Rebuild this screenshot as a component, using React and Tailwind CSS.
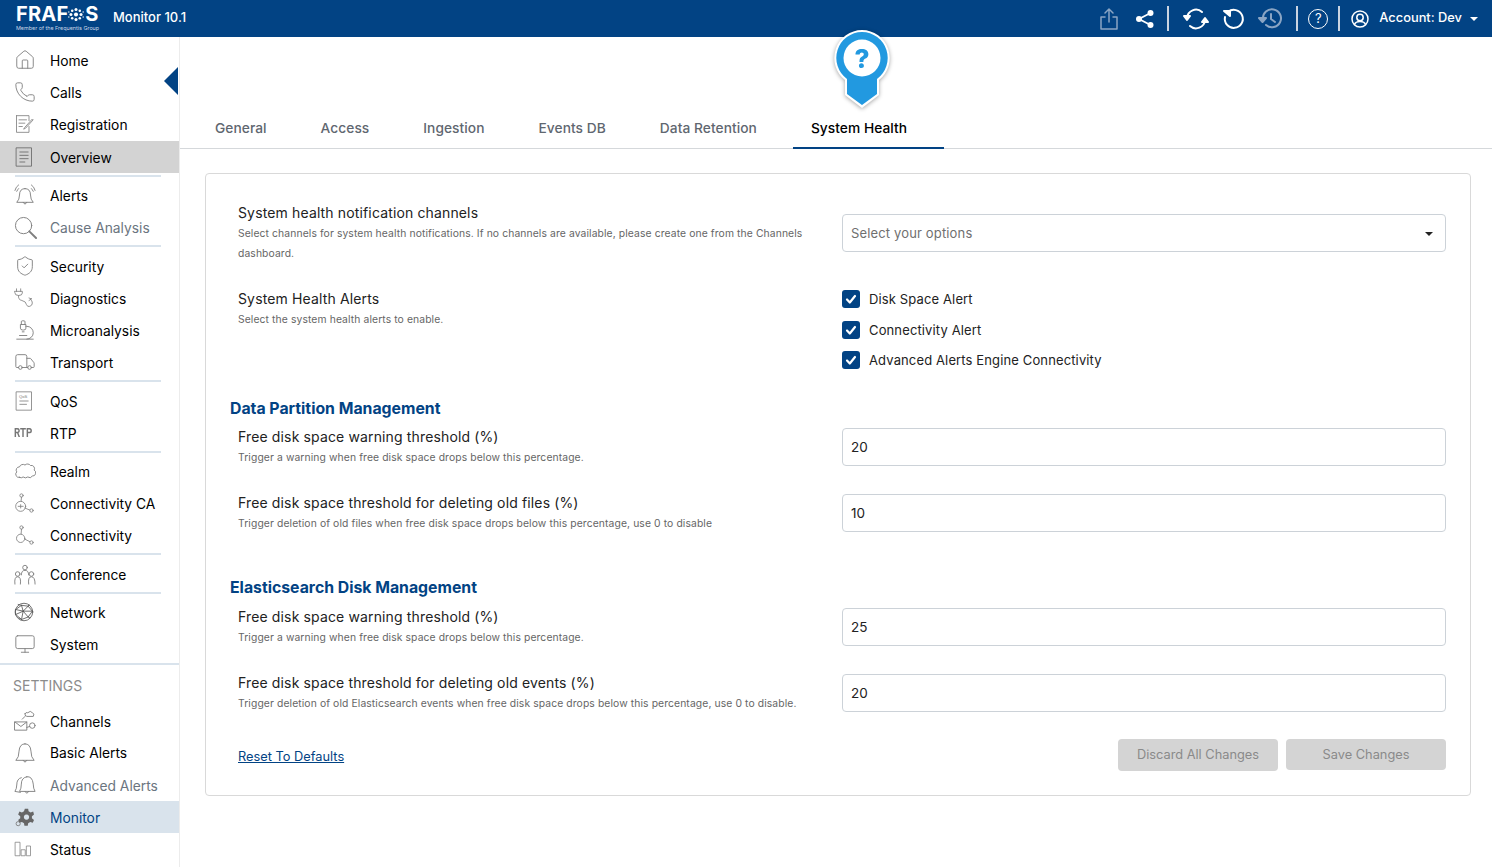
import React from 'react';
import { House, Phone, Truck, Microscope, ShieldCheck, Monitor } from 'lucide-react';

const ic = { fill: 'none', stroke: '#7f7f7f', strokeWidth: 1, strokeLinecap: 'round', strokeLinejoin: 'round' };

const Svg = ({ children, size = 20, box = 24 }) => (
    <svg width={size} height={size} viewBox={`0 0 ${box} ${box}`} {...ic}>{children}</svg>
);

const lu = { size: 22, strokeWidth: 1, color: '#7f7f7f' };

const icons = {
    home: <House {...lu} />,
    calls: <Phone {...lu} />,
    registration: <Svg><path d="M3 2h15v6M18 15v7H3V2M6 7h9M6 11h7M6 15h4M13 16l9-10 1 1-9 10-2 1Z" /></Svg>,
    overview: <Svg><path d="M3 1h18v22H3ZM7 6h10M7 10h10M7 14h10M7 18h6" stroke="#666" /></Svg>,
    alerts: <Svg size={22}><path d="M12 5q-6 0-6 7 0 5-3 8h18q-3-3-3-8 0-7-6-7ZM10 20q2 4 4 0M1 7q1-4 4-6M23 7q-1-4-4-6M3 8q1-2 2-3M21 8q-1-2-2-3" /></Svg>,
    cause: <Svg size={23}><circle cx="10" cy="10" r="8.5" /><path d="m16 16 7 7" strokeWidth="2" /></Svg>,
    security: <ShieldCheck {...lu} />,
    diagnostics: <Svg><path d="M3 1v3M8 1v3M1 4h9v2q0 3-4.500 3T1 6ZM5.500 9q-1 5 4 6 5 1 5.500 5 1 3 4 2t3-4-2-4M18 15l3-2M18 12l3 1" /></Svg>,
    micro: <Microscope {...lu} />,
    transport: <Truck {...lu} />,
    qos: <Svg><path d="M3 1h18v22H3ZM7 12h10M7 16h8" /><text x="6" y="8" fontSize="5" stroke="none" fill="#777" fontFamily="Liberation Sans">QoS</text></Svg>,
    realm: <Svg size={22} box={24}><path d="M6 19a3.500 3.500 0 0 1-3-6 3.500 3.500 0 0 1 3-5.500 4 4 0 0 1 6-2 4 4 0 0 1 6 .5 3.500 3.500 0 0 1 4 5 3.500 3.500 0 0 1-2 6.500 3.500 3.500 0 0 1-5 1 4 4 0 0 1-5 0 3.500 3.500 0 0 1-4 .5Z" /></Svg>,
    connca: <Svg><circle cx="8" cy="16" r="6" /><circle cx="9" cy="3" r="2" /><circle cx="21" cy="21" r="2" /><path d="M9 5 8.500 10M13 18l6 2.500M5 16h6M8 14v4" /></Svg>,
    conn: <Svg><circle cx="8" cy="16" r="5" /><circle cx="9" cy="3" r="2" /><circle cx="21" cy="21" r="2" /><path d="M9 5 8.500 11M13 17l6 3" /></Svg>,
    conf: <Svg size={22}><circle cx="12" cy="5" r="2.500" /><path d="M8 13q0-5 4-5t4 5" /><circle cx="4" cy="12" r="2.500" /><path d="M1 23q-1-8 3-8t3 8" /><circle cx="19" cy="12" r="2.500" /><path d="M16 23q-1-8 3-8t4 8" /></Svg>,
    network: <Svg><circle cx="12" cy="12" r="10.500" stroke="#555" /><path d="M2 9 9 4l8 1 5 6-5 7-8 3-7-6ZM9 4l2 7 6-6M11 11l6 7M11 11l-9-2M11 11l-2 10M11 11 22 11M11 11l-9 4M9 4 5 3M17 5l1-2M17 18l2 1M9 21l-3-2" stroke="#555" /></Svg>,
    system: <Monitor {...lu} />,
    channels: <Svg size={22}><path d="M1 13h13v9H1ZM1 13l6.500 5 6.500-5M9 10l3-3M14 19l3-1" /><path d="M12 4q1-2 3-1 3-3 5 0 3 1 1 4h-7q-3-1-2-3Z" /><circle cx="20" cy="17" r="3" /></Svg>,
    basic: <Svg size={22}><path d="M12 2q-6 0-6.500 8 0 7-3.500 10h20q-3.500-3-3.500-10Q18 2 12 2ZM10 20q2 4 4 0" /></Svg>,
    advanced: <Svg size={22}><path d="M8 4q-5 1-5 8 0 4-2 7l6 1M14 3q6-1 7 8 0 5 2 8H6q2-3 2-8 0-7 6-8ZM12 19q2 4 4 0" /></Svg>,
    status: <Svg size={18}><path d="M2 3h6v18H2ZM10 13h5v8h-5ZM17 8h5v13h-5Z" /></Svg>,
};

const Gear = () => (
    <svg width="20" height="20" viewBox="0 0 24 24">
        <path fill="#666" fillRule="evenodd" d="M13 2h4l.5 3 2.500 1.500 3-1 1 3.500-2.500 2v2.500l2.500 2-1.500 3.500-3-1-2.500 1.500-.5 3h-4l-.5-3-2.500-1.500-3 1L5 15.500l2.500-2V11L5 9l1.500-3.500 3 1L12 5ZM15 9a3.200 3.200 0 1 0 .01 0Z" />
        <circle cx="5" cy="20" r="2.500" fill="none" stroke="#777" />
    </svg>
);

const Item = ({ icon, label, muted, active, gray, className = 'h-[32px]' }) => (
    <div className={`flex items-center pl-[14px] text-[13.8px] ${className} ${active ? 'bg-[#d9e3ec] text-[#024384]' : gray ? 'bg-[#d3d3d3] text-black' : muted ? 'text-[#6b7580]' : 'text-black'}`}>
        <div className="w-[36px] shrink-0 flex items-center">{icon}</div>
        <span className="pt-[2px]">{label}</span>
    </div>
);

const Divider = ({ tight }) => <div className={`h-[2px] mt-[2px] ml-[15px] w-[146px] bg-[#d9e3ec] ${tight ? 'mb-[2px]' : 'mb-[3px]'}`} />;

const Sidebar = () => (
    <aside className="relative w-[180px] shrink-0 border-r border-[#ececec] pt-[7px] bg-white">
        <div className="absolute right-[1px] top-[30px] w-0 h-0 border-y-[14px] border-y-transparent border-r-[14px] border-r-[#024384]" />
        <Item icon={icons.home} label="Home" />
        <Item icon={icons.calls} label="Calls" />
        <Item icon={icons.registration} label="Registration" />
        <Item icon={icons.overview} label="Overview" gray className="h-[32px] mt-[1px]" />
        <Divider tight />
        <Item icon={icons.alerts} label="Alerts" />
        <Item icon={icons.cause} label="Cause Analysis" muted />
        <Divider />
        <Item icon={icons.security} label="Security" />
        <Item icon={icons.diagnostics} label="Diagnostics" />
        <Item icon={icons.micro} label="Microanalysis" />
        <Item icon={icons.transport} label="Transport" />
        <Divider />
        <Item icon={icons.qos} label="QoS" />
        <Item icon={<span className="text-[13px] font-bold text-[#777] font-['Roboto',sans-serif] inline-block scale-x-75 origin-left">RTP</span>} label="RTP" />
        <Divider tight />
        <Item icon={icons.realm} label="Realm" />
        <Item icon={icons.connca} label="Connectivity CA" />
        <Item icon={icons.conn} label="Connectivity" />
        <Divider />
        <Item icon={icons.conf} label="Conference" />
        <Divider tight />
        <Item icon={icons.network} label="Network" />
        <Item icon={icons.system} label="System" />
        <div className="h-[2px] mt-[3px] bg-[#d9e3ec]" />
        <div className="h-[41px] pl-[13px] pb-[1px] flex items-center text-[14px] text-[#8c8c8c]">SETTINGS</div>
        <Item icon={icons.channels} label="Channels" className="h-[30px]" />
        <Item icon={icons.basic} label="Basic Alerts" className="h-[33px]" />
        <Item icon={icons.advanced} label="Advanced Alerts" muted />
        <Item icon={<Gear />} label="Monitor" active />
        <Item icon={icons.status} label="Status" />
    </aside>
);

const wh = { fill: 'none', stroke: '#fff', strokeLinecap: 'round', strokeLinejoin: 'round' };

const Header = () => (
    <header className="h-[37px] bg-[#024384] text-white flex items-center shrink-0">
        <div className="ml-[16px] w-[97px] flex flex-col">
            <div className="flex items-center h-[19px] text-[20px] leading-[19px] font-bold tracking-[0.2px]">
                <span>FRAF</span>
                <svg width="16" height="17" viewBox="0 0 19 18">
                    <g fill="#fff">
                        <circle cx="9.500" cy="9" r="2.400" /><circle cx="9.500" cy="3" r="1.800" /><circle cx="9.500" cy="15" r="1.800" />
                        <circle cx="3.500" cy="9" r="1.800" /><circle cx="15.500" cy="9" r="1.800" /><circle cx="5" cy="4.500" r="1.500" />
                        <circle cx="14" cy="4.500" r="1.500" /><circle cx="5" cy="13.500" r="1.500" /><circle cx="14" cy="13.500" r="1.500" />
                        <circle cx="1" cy="6" r=".8" /><circle cx="18" cy="6" r=".8" /><circle cx="1" cy="12" r=".8" /><circle cx="18" cy="12" r=".8" />
                    </g>
                </svg>
                <span className="ml-[1px]">S</span>
            </div>
            <div className="text-[5.400px] leading-[7px] mt-[1px] text-[#c8d6e6] whitespace-nowrap">Member of the Frequentis Group</div>
        </div>
        <div className="text-[13px] font-medium -mt-[1px]">Monitor 10.1</div>
        <div className="ml-auto flex items-center">
            <svg width="20" height="24" viewBox="0 0 20 24" {...wh} stroke="#8aa5c4" strokeWidth="1.500" className="mr-[16px]">
                <path d="M6 10H2v12h16V10h-4M10 15V3M6 6l4-4 4 4" />
            </svg>
            <svg width="20" height="20" viewBox="0 0 20 20" className="mr-[12px]">
                <g fill="#fff"><circle cx="15.500" cy="4" r="3" /><circle cx="4" cy="10" r="3" /><circle cx="15.500" cy="16" r="3" /></g>
                <path d="M15.500 4 4 10l11.500 6" stroke="#fff" strokeWidth="1.800" fill="none" />
            </svg>
            <div className="w-[2px] h-[25px] bg-[#c9d4e2] mr-[14px]" />
            <svg width="26" height="24" viewBox="0 0 26 24" {...wh} strokeWidth="2" className="mr-[12px]">
                <path d="M4 11a9 9 0 0 1 15-6M22 13a9 9 0 0 1-15 6" />
                <path d="M1 9h6l-3 4ZM25 15h-6l3-4Z" fill="#fff" />
            </svg>
            <svg width="24" height="24" viewBox="0 0 24 24" {...wh} strokeWidth="2" className="mr-[13px]">
                <path d="M7 5a9 9 0 1 1-3 5" />
                <path d="M3 4h6v5Z" fill="#fff" />
            </svg>
            <svg width="24" height="24" viewBox="0 0 24 24" {...wh} stroke="#8aa5c4" strokeWidth="2" className="mr-[14px]">
                <path d="M5 12a9 9 0 1 1 3 6M13 7v5l4 3" />
                <path d="M1 11h7l-3.500 4Z" fill="#8aa5c4" />
            </svg>
            <div className="w-[2px] h-[25px] bg-[#c9d4e2] mr-[10px]" />
            <div className="w-[20px] h-[20px] rounded-full border-[1.500px] border-white flex items-center justify-center text-[13px] mr-[10px]">?</div>
            <div className="w-[2px] h-[25px] bg-[#c9d4e2] mr-[11px]" />
            <svg width="18" height="18" viewBox="0 0 18 18" {...wh} strokeWidth="1.500" className="mr-[10px]">
                <circle cx="9" cy="9" r="8" /><circle cx="9" cy="7.500" r="3.200" /><path d="M3.500 14.500q1-3 5.500-3t5.500 3" />
            </svg>
            <span className="text-[12.850px] font-medium -mt-[1px]">Account: Dev</span>
            <div className="ml-[8px] mr-[14px] w-0 h-0 border-x-[4px] border-x-transparent border-t-[4px] border-t-white" />
        </div>
    </header>
);

const Tab = ({ label, active }) => (
    <div className={`h-[37px] flex items-center pb-[3px] text-[13.750px] tracking-[0.05px] font-medium ${active ? 'pl-[18px] w-[151px] border-b-2 border-[#024384] text-black -mb-px' : 'px-[18px] mr-[18px] text-[#5f6770]'}`}>
        {label}
    </div>
);

const PinIcon = () => (
    <svg width="64" height="84" viewBox="0 0 64 84" className="absolute left-[650px] top-[-9px] drop-shadow-[0_1px_2px_rgba(0,0,0,0.35)]">
        <path fill="#fff" d="M32 2a28 28 0 0 1 17 50v15L32 80 15 67V52A28 28 0 0 1 32 2Z" />
        <path fill="#2299e0" d="M32 4a26 26 0 0 1 15 47v15L32 77 17 66V51A26 26 0 0 1 32 4Z" />
        <circle cx="32" cy="30" r="18.500" fill="#fff" />
        <text x="32" y="40" textAnchor="middle" fontSize="26" fontWeight="800" fill="#2299e0" fontFamily="Inter, sans-serif">?</text>
    </svg>
);

const Field = ({ title, sub }) => (
    <div className="w-[604px]">
        <div className="text-[14px] leading-[20px] text-[#222] tracking-[0.14px]">{title}</div>
        <div className="text-[10.350px] leading-[20px] text-[#666] tracking-[0.1px]">{sub}</div>
    </div>
);

const NumberRow = ({ title, sub, value, className }) => (
    <div className={`flex ${className}`}>
        <Field title={title} sub={sub} />
        <div className="w-[604px] h-[38px] mt-[1px] border border-[#ccd2d8] rounded-[4px] flex items-center px-[8px] pt-[2px] text-[13.500px] text-[#222]">{value}</div>
    </div>
);

const Check = ({ label }) => (
    <div className="flex items-center h-[30.500px] text-[13px] tracking-[0.13px] text-[#222]">
        <div className="w-[18px] h-[18px] rounded-[3px] bg-[#024384] flex items-center justify-center mr-[9px]">
            <svg width="12" height="12" viewBox="0 0 12 12" fill="none" stroke="#fff" strokeWidth="2.200" strokeLinecap="round" strokeLinejoin="round">
                <path d="m2 6.500 2.800 3L10 3" />
            </svg>
        </div>
        <span className="pt-[1px]">{label}</span>
    </div>
);

const Heading = ({ children, className }) => (
    <div className={`-ml-[8px] text-[15.800px] leading-[24px] pt-px -mb-px font-bold text-[#024384] ${className}`}>{children}</div>
);

const App = () => (
    <div className="h-screen overflow-hidden flex flex-col bg-white font-['Inter',sans-serif]">
        <Header />
        <div className="flex flex-1 min-h-0">
            <Sidebar />
            <main className="flex-1 min-w-0">
                <div className="relative h-[112px] flex items-end pl-[17px] border-b border-[#d5d8db]">
                    <PinIcon />
                    <Tab label="General" />
                    <Tab label="Access" />
                    <Tab label="Ingestion" />
                    <Tab label="Events DB" />
                    <Tab label="Data Retention" />
                    <Tab label="System Health" active />
                </div>
                <div className="ml-[25px] mr-[21px] mt-[24px] h-[623px] border border-[#d9d9d9] rounded-[4px] pl-[32px] pr-[24px] pt-[29px]">
                    <div className="flex">
                        <div className="w-[604px] pr-[30px]">
                            <div className="text-[14px] leading-[20px] text-[#222] tracking-[0.14px]">System health notification channels</div>
                            <div className="text-[10.350px] leading-[20px] text-[#666] tracking-[0.1px]">Select channels for system health notifications. If no channels are available, please create one from the Channels dashboard.</div>
                        </div>
                        <div className="w-[604px] h-[38px] mt-[11px] border border-[#ccd2d8] rounded-[4px] flex items-center justify-between pl-[8px] pr-[12px] pt-[1px] text-[13px] tracking-[0.15px] text-[#6f6f6f]">
                            Select your options
                            <div className="w-0 h-0 border-x-[4px] border-x-transparent border-t-[4px] border-t-[#222]" />
                        </div>
                    </div>
                    <div className="flex mt-[26px]">
                        <Field title="System Health Alerts" sub="Select the system health alerts to enable." />
                        <div className="-mt-[5px]">
                            <Check label="Disk Space Alert" />
                            <Check label="Connectivity Alert" />
                            <Check label="Advanced Alerts Engine Connectivity" />
                        </div>
                    </div>
                    <Heading className="mt-[20px]">Data Partition Management</Heading>
                    <NumberRow className="mt-[7px]" title="Free disk space warning threshold (%)" sub="Trigger a warning when free disk space drops below this percentage." value="20" />
                    <NumberRow className="mt-[26px]" title="Free disk space threshold for deleting old files (%)" sub="Trigger deletion of old files when free disk space drops below this percentage, use 0 to disable" value="10" />
                    <Heading className="mt-[42px]">Elasticsearch Disk Management</Heading>
                    <NumberRow className="mt-[8px]" title="Free disk space warning threshold (%)" sub="Trigger a warning when free disk space drops below this percentage." value="25" />
                    <NumberRow className="mt-[26px]" title="Free disk space threshold for deleting old events (%)" sub="Trigger deletion of old Elasticsearch events when free disk space drops below this percentage, use 0 to disable." value="20" />
                    <div className="flex items-start mt-[26px]">
                        <a className="text-[12.800px] leading-[20px] pt-[8px] text-[#024384] underline">Reset To Defaults</a>
                        <div className="ml-auto flex items-start gap-[8px]">
                            <button className="w-[160px] h-[32px] rounded-[4px] bg-[#d4d4d4] text-[12.800px] text-[#8a8a8a]">Discard All Changes</button>
                            <button className="w-[160px] h-[31px] rounded-[4px] bg-[#d4d4d4] pt-[1px] text-[12.800px] text-[#8a8a8a]">Save Changes</button>
                        </div>
                    </div>
                </div>
            </main>
        </div>
    </div>
);

export default App;
